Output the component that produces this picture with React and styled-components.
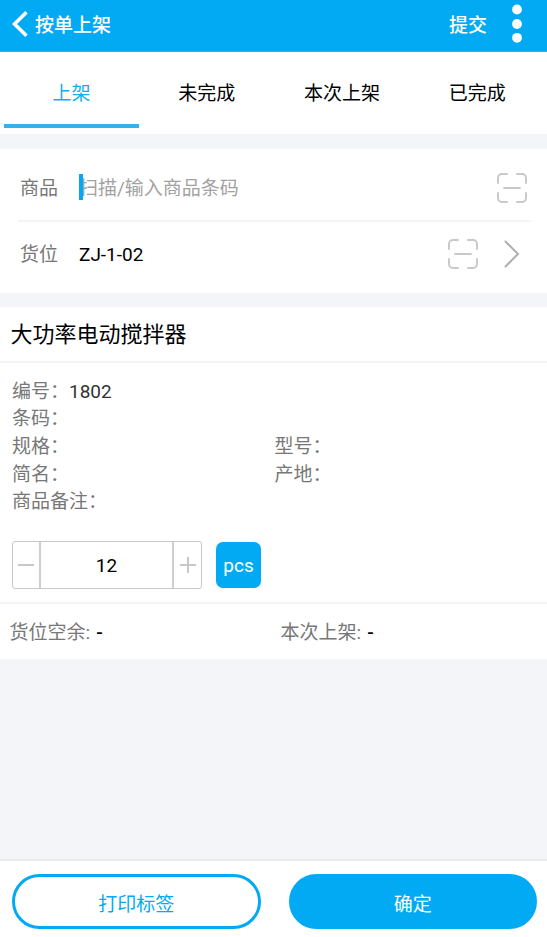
import React from "react";
import styled, { createGlobalStyle } from "styled-components";

const GlobalStyle = createGlobalStyle`
    * {
        box-sizing: border-box;
    }

    body {
        margin: 0;
        background: #f4f5f8;
        font-family: Roboto, "Noto Sans CJK SC", sans-serif;
        font-size: 19px;
    }

    button {
        padding: 0;
        border: none;
        background: transparent;
        font: inherit;
    }

    svg {
        display: block;
        flex: none;
    }
`

const Page = styled.div`
    width: 100%;
    height: 937px;
    display: flex;
    flex-direction: column;
    overflow: hidden;
`

const Header = styled.header`
    height: 52px;
    padding: 0 23px 3px 11px;
    display: flex;
    align-items: center;
    background: #02aaf4;
    border-bottom: 1px solid #32b4f2;
    color: white;
`

const HeaderTitle = styled.div`
    flex: 1;
    margin-left: 6px;
    padding-top: 4px;
    font-weight: 500;
    line-height: 28px;
`

const SubmitButton = styled.button`
    margin-right: 23px;
    padding-top: 4px;
    color: white;
    font-weight: 500;
    line-height: 28px;
`

const TabBar = styled.nav`
    height: 82px;
    padding: 0 2px 0 4px;
    display: flex;
    background: white;
`

const Tab = styled.button`
    flex: 1;
    height: 76px;
    padding-top: 6px;
    color: ${props => props.$active ? "#18acf0" : "black"};
    border-bottom: 4px solid ${props => props.$active ? "#36b2e6" : "transparent"};
`

const Card = styled.section`
    margin-top: ${props => props.$gap};
    background: white;
`

const FieldRow = styled.div`
    height: ${props => props.$divided ? "73px" : "71px"};
    margin: 0 16px 0 18px;
    padding: ${props => props.$padding};
    display: flex;
    align-items: center;
    border-bottom: ${props => props.$divided ? "2px solid #f4f4f5" : "none"};
`

const FieldLabel = styled.div`
    width: 59px;
    padding-bottom: 3px;
    color: #777;
`

const FieldValue = styled.div`
    flex: 1;
    color: black;
`

const Placeholder = styled.div`
    position: relative;
    flex: 1;
    padding-top: 2px;
    color: #a2a2a2;
    line-height: 26px;
`

const Caret = styled.span`
    position: absolute;
    left: 0;
    top: 0;
    width: 3.5px;
    height: 26px;
    background: #02aaf4;
`

const IconGroup = styled.div`
    display: flex;
    align-items: center;
    gap: 26px;
`

const ProductName = styled.div`
    height: 56px;
    padding-left: 10.5px;
    border-bottom: 2px solid #f5f5f6;
    color: black;
    font-size: 22px;
    line-height: 56px;
`

const Details = styled.div`
    padding: 14.5px 12px 0.5px;
    display: grid;
    grid-template-columns: 262.5px 1fr;
    grid-auto-rows: 27.6px;
    align-items: center;
    color: #777;
    line-height: 27px;
`

const Detail = styled.div`
    grid-column: ${props => props.$wide ? "1 / -1" : "auto"};
`

const DetailValue = styled.span`
    color: #333;
`

const QuantityRow = styled.div`
    height: 88px;
    padding: 25px 0 0 12px;
    display: flex;
    gap: 14px;
    border-bottom: 2px solid #f5f5f6;
`

const Stepper = styled.div`
    width: 190px;
    height: 48px;
    display: flex;
    border: 1px solid #c7c7cc;
    border-radius: 3px;
`

const StepButton = styled.button`
    width: ${props => props.$width};
    display: flex;
    align-items: center;
    justify-content: center;
`

const Quantity = styled.div`
    flex: 1;
    border: solid #cfcfd3;
    border-width: 0 2px;
    color: black;
    text-align: center;
    line-height: 48px;
`

const Unit = styled.div`
    width: 45px;
    height: 46px;
    margin-top: 1px;
    border-radius: 7px;
    background: #02aaf4;
    color: white;
    text-align: center;
    line-height: 47px;
`

const Summary = styled.div`
    height: 55px;
    padding: 0 0 2px 9.5px;
    display: grid;
    grid-template-columns: 271px 1fr;
    align-items: center;
    color: #777;
`

const SummaryValue = styled.span`
    margin-left: 1.5px;
    color: black;
    font-weight: 500;
`

const Footer = styled.footer`
    height: 78px;
    margin-top: auto;
    padding: 13px 10px 0 12px;
    display: flex;
    gap: 28px;
    border-top: 2px solid #e8e9eb;
    background: white;
`

const FooterButton = styled.button`
    flex: 1;
    height: 55px;
    padding-top: 1px;
    border: 3px solid #02aaf4;
    border-radius: 28px;
    background: ${props => props.$primary ? "#02aaf4" : "white"};
    color: ${props => props.$primary ? "white" : "#02aaf4"};
`

const BackIcon = () => (
    <svg width="18" height="28" viewBox="0 0 18 28" fill="none" stroke="white" strokeWidth="3.6">
        <path d="M15.5 2.3 3.5 14l12 11.7" />
    </svg>
)

const MoreIcon = () => (
    <svg width="14" height="40" viewBox="0 0 14 40" fill="white">
        <circle cx="7" cy="5.5" r="4.9" />
        <circle cx="7" cy="20" r="4.9" />
        <circle cx="7" cy="33.8" r="4.9" />
    </svg>
)

const ScanIcon = () => (
    <svg width="30" height="30" viewBox="0 0 30 30" fill="none" stroke="#c7c7cc" strokeWidth="1.9" strokeLinecap="round">
        <path d="M1 10V5a4 4 0 0 1 4-4h5M20 1h5a4 4 0 0 1 4 4v5M29 20v5a4 4 0 0 1-4 4h-5M10 29H5a4 4 0 0 1-4-4v-5M7 15h16" />
    </svg>
)

const ArrowIcon = () => (
    <svg width="16" height="28" viewBox="0 0 16 28" fill="none" stroke="#b0b0b0" strokeWidth="2" strokeLinecap="round">
        <path d="M1.5 1.5 14 14 1.5 26.5" />
    </svg>
)

const StepIcon = ({ plus }) => (
    <svg width="16" height="16" viewBox="0 0 16 16" stroke="#c7c7cc" strokeWidth="2">
        <path d={plus ? "M0 8h16M8 0v16" : "M0 8h16"} />
    </svg>
)

const tabs = ["上架", "未完成", "本次上架", "已完成"]

const App = () => (
    <Page>
        <GlobalStyle />
        <Header>
            <BackIcon />
            <HeaderTitle>按单上架</HeaderTitle>
            <SubmitButton>提交</SubmitButton>
            <MoreIcon />
        </Header>
        <TabBar>
            {tabs.map((tab, i) => <Tab key={tab} $active={i === 0}>{tab}</Tab>)}
        </TabBar>

        <Card $gap="15px">
            <FieldRow $divided $padding="7px 4px 0 2px">
                <FieldLabel>商品</FieldLabel>
                <Placeholder>扫描/输入商品条码<Caret /></Placeholder>
                <ScanIcon />
            </FieldRow>
            <FieldRow $padding="0 11px 7px 2px">
                <FieldLabel>货位</FieldLabel>
                <FieldValue>ZJ-1-02</FieldValue>
                <IconGroup>
                    <ScanIcon />
                    <ArrowIcon />
                </IconGroup>
            </FieldRow>
        </Card>

        <Card $gap="14px">
            <ProductName>大功率电动搅拌器</ProductName>
            <Details>
                <Detail $wide>编号：<DetailValue>1802</DetailValue></Detail>
                <Detail $wide>条码：</Detail>
                <Detail>规格：</Detail>
                <Detail>型号：</Detail>
                <Detail>简名：</Detail>
                <Detail>产地：</Detail>
                <Detail $wide>商品备注：</Detail>
            </Details>
            <QuantityRow>
                <Stepper>
                    <StepButton $width="26px"><StepIcon /></StepButton>
                    <Quantity>12</Quantity>
                    <StepButton $width="27px"><StepIcon plus /></StepButton>
                </Stepper>
                <Unit>pcs</Unit>
            </QuantityRow>
            <Summary>
                <div>货位空余: <SummaryValue>-</SummaryValue></div>
                <div>本次上架: <SummaryValue>-</SummaryValue></div>
            </Summary>
        </Card>

        <Footer>
            <FooterButton>打印标签</FooterButton>
            <FooterButton $primary>确定</FooterButton>
        </Footer>
    </Page>
)

export default App;
